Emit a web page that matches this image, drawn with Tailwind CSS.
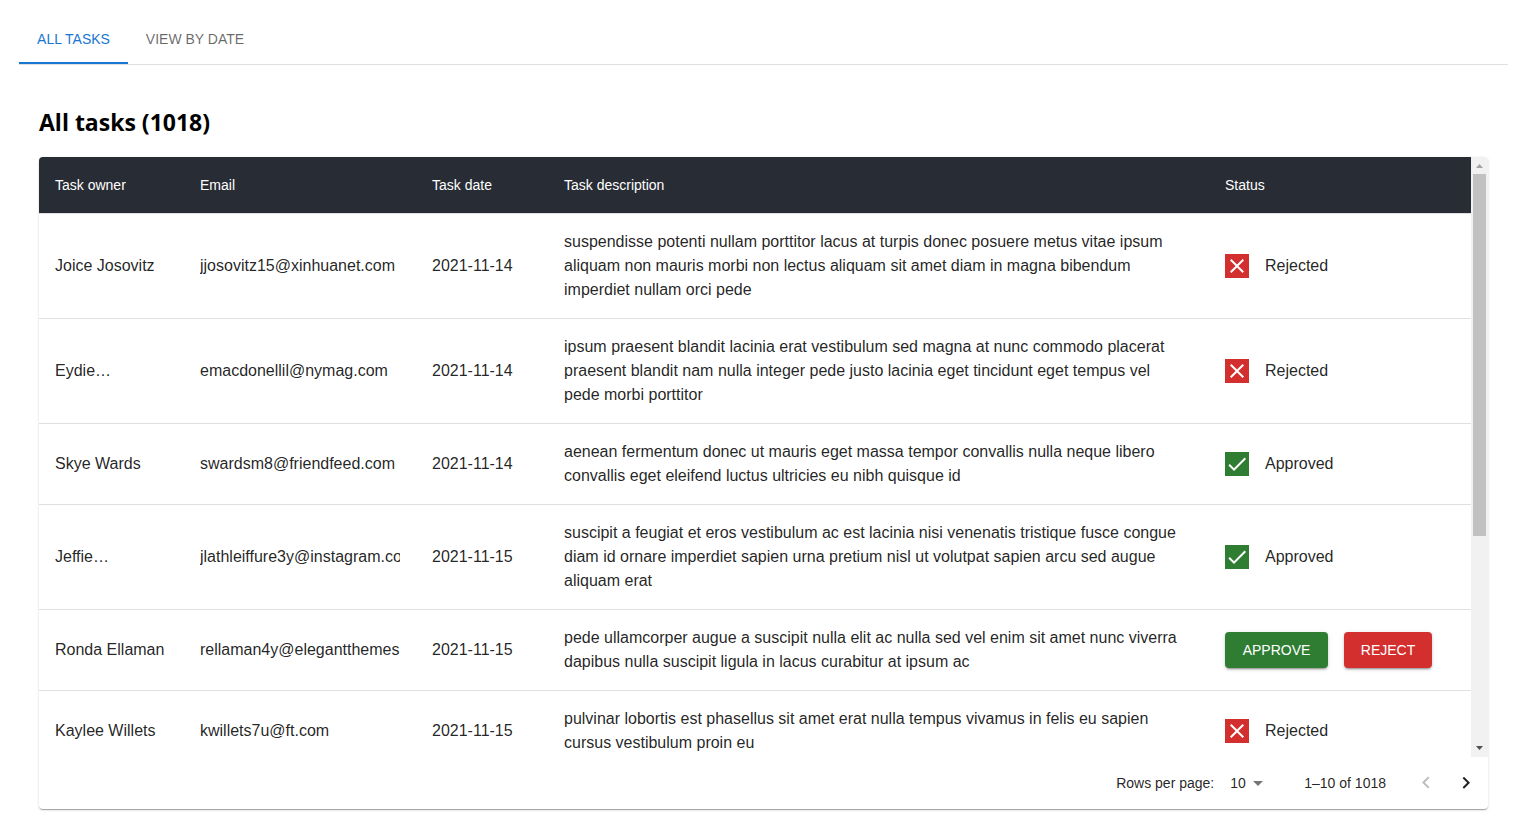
<!DOCTYPE html>
<html lang="en">
<head>
<meta charset="utf-8">
<title>All tasks</title>
<script src="https://cdn.jsdelivr.net/npm/@tailwindcss/browser@4"></script>
</head>
<body class="bg-white pt-4 pr-4 pb-2 pl-[19px] font-['Liberation_Sans',Arial,sans-serif] text-base text-black/87">
<svg class="hidden" aria-hidden="true">
  <symbol id="close" viewBox="0 0 24 24"><path fill="currentColor" d="M19 6.41L17.59 5 12 10.59 6.41 5 5 6.41 10.59 12 5 17.59 6.41 19 12 13.41 17.59 19 19 17.59 13.41 12z"/></symbol>
  <symbol id="check" viewBox="0 0 24 24"><path fill="currentColor" d="M9 16.17L4.83 12l-1.42 1.41L9 19 21 7l-1.41-1.41z"/></symbol>
</svg>

<nav class="flex border-b border-[#e0e0e0] text-sm" role="tablist">
  <button role="tab" aria-selected="true" class="h-12 w-[109px] border-b-2 border-[#1976d2] text-[#1976d2] uppercase">All tasks</button>
  <button role="tab" aria-selected="false" class="h-12 w-[134px] border-b-2 border-transparent text-black/60 uppercase">View by date</button>
</nav>

<main class="px-5 pt-10">
  <h2 class="mb-[18px] font-['Open_Sans',sans-serif] text-[23px] leading-[34px] font-bold text-black">All tasks (1018)</h2>

  <section class="overflow-hidden rounded bg-white shadow-[0_2px_1px_-1px_rgba(0,0,0,0.2),0_1px_1px_0_rgba(0,0,0,0.14),0_1px_3px_0_rgba(0,0,0,0.12)]">
    <div class="flex h-[600px] overflow-hidden">
      <div class="min-w-0 flex-1 overflow-hidden">
        <table class="w-full table-fixed border-separate border-spacing-0 text-left leading-6 [&_td]:border-b [&_td]:border-[#e0e0e0] [&_td]:p-4 [&_td:nth-child(4)]:pr-6 [&_th]:border-b [&_th]:border-[#e0e0e0] [&_th]:bg-[#282c34] [&_th]:bg-clip-padding [&_th]:p-4 [&_th]:text-sm [&_th]:leading-6 [&_th]:font-medium [&_th]:text-white">
          <colgroup><col class="w-[145px]"><col class="w-[232px]"><col class="w-[132px]"><col><col class="w-[262px]"></colgroup>
          <thead>
            <tr><th scope="col">Task owner</th><th scope="col">Email</th><th scope="col">Task date</th><th scope="col">Task description</th><th scope="col">Status</th></tr>
          </thead>
          <tbody>
            <tr>
              <td>Joice Josovitz</td>
              <td><div class="overflow-hidden whitespace-nowrap">jjosovitz15@xinhuanet.com</div></td>
              <td>2021-11-14</td>
              <td>suspendisse potenti nullam porttitor lacus at turpis donec posuere metus vitae ipsum aliquam non mauris morbi non lectus aliquam sit amet diam in magna bibendum imperdiet nullam orci pede</td>
              <td><div class="flex items-center gap-4"><svg class="size-6 bg-[#d32f2f] text-white"><use href="#close"/></svg>Rejected</div></td>
            </tr>
            <tr>
              <td>Eydie…</td>
              <td><div class="overflow-hidden whitespace-nowrap">emacdonellil@nymag.com</div></td>
              <td>2021-11-14</td>
              <td>ipsum praesent blandit lacinia erat vestibulum sed magna at nunc commodo placerat praesent blandit nam nulla integer pede justo lacinia eget tincidunt eget tempus vel pede morbi porttitor</td>
              <td><div class="flex items-center gap-4"><svg class="size-6 bg-[#d32f2f] text-white"><use href="#close"/></svg>Rejected</div></td>
            </tr>
            <tr>
              <td>Skye Wards</td>
              <td><div class="overflow-hidden whitespace-nowrap">swardsm8@friendfeed.com</div></td>
              <td>2021-11-14</td>
              <td>aenean fermentum donec ut mauris eget massa tempor convallis nulla neque libero convallis eget eleifend luctus ultricies eu nibh quisque id</td>
              <td><div class="flex items-center gap-4"><svg class="size-6 bg-[#2e7d32] text-white"><use href="#check"/></svg>Approved</div></td>
            </tr>
            <tr>
              <td>Jeffie…</td>
              <td><div class="overflow-hidden whitespace-nowrap">jlathleiffure3y@instagram.com</div></td>
              <td>2021-11-15</td>
              <td>suscipit a feugiat et eros vestibulum ac est lacinia nisi venenatis tristique fusce congue diam id ornare imperdiet sapien urna pretium nisl ut volutpat sapien arcu sed augue aliquam erat</td>
              <td><div class="flex items-center gap-4"><svg class="size-6 bg-[#2e7d32] text-white"><use href="#check"/></svg>Approved</div></td>
            </tr>
            <tr>
              <td>Ronda Ellaman</td>
              <td><div class="overflow-hidden whitespace-nowrap">rellaman4y@elegantthemes.com</div></td>
              <td>2021-11-15</td>
              <td>pede ullamcorper augue a suscipit nulla elit ac nulla sed vel enim sit amet nunc viverra dapibus nulla suscipit ligula in lacus curabitur at ipsum ac</td>
              <td>
                <div class="flex gap-4 text-sm text-white">
                  <button class="h-9 w-[103px] rounded bg-[#2e7d32] uppercase shadow-[0_3px_1px_-2px_rgba(0,0,0,0.2),0_2px_2px_0_rgba(0,0,0,0.14),0_1px_5px_0_rgba(0,0,0,0.12)]">Approve</button>
                  <button class="h-9 w-[88px] rounded bg-[#d32f2f] uppercase shadow-[0_3px_1px_-2px_rgba(0,0,0,0.2),0_2px_2px_0_rgba(0,0,0,0.14),0_1px_5px_0_rgba(0,0,0,0.12)]">Reject</button>
                </div>
              </td>
            </tr>
            <tr>
              <td>Kaylee Willets</td>
              <td><div class="overflow-hidden whitespace-nowrap">kwillets7u@ft.com</div></td>
              <td>2021-11-15</td>
              <td>pulvinar lobortis est phasellus sit amet erat nulla tempus vivamus in felis eu sapien cursus vestibulum proin eu</td>
              <td><div class="flex items-center gap-4"><svg class="size-6 bg-[#d32f2f] text-white"><use href="#close"/></svg>Rejected</div></td>
            </tr>
          </tbody>
        </table>
      </div>
      <!-- Scrollbar of the table area -->
      <div class="flex w-[17px] flex-col items-center justify-between bg-[#f1f1f1]" aria-hidden="true">
        <div class="flex flex-col items-center">
          <svg class="size-[17px]" viewBox="0 0 17 17"><path fill="#a3a3a3" d="M5 11h7L8.500 7z"/></svg>
          <div class="h-[362px] w-[13px] bg-[#c1c1c1]"></div>
        </div>
        <svg class="size-[17px]" viewBox="0 0 17 17"><path fill="#505050" d="M5 6h7L8.500 10z"/></svg>
      </div>
    </div>

    <footer class="flex h-[52px] items-center justify-end pr-0.5 text-sm">
      <label for="rows">Rows per page:</label>
      <div class="relative mr-[34px] ml-2">
        <select id="rows" class="block h-6 w-12 appearance-none bg-transparent pl-2 text-sm"><option>10</option><option>25</option><option>100</option></select>
        <svg class="pointer-events-none absolute top-0 right-0 size-6 text-black/54" viewBox="0 0 24 24"><path fill="currentColor" d="M7 10l5 5 5-5z"/></svg>
      </div>
      <p class="mr-5">1–10 of 1018</p>
      <button class="p-2 text-black/26" disabled aria-label="Go to previous page"><svg class="size-6" viewBox="0 0 24 24"><path fill="currentColor" d="M15.410 16.090l-4.580-4.590 4.580-4.590L14 5.500l-6 6 6 6z"/></svg></button>
      <button class="p-2" aria-label="Go to next page"><svg class="size-6" viewBox="0 0 24 24"><path fill="currentColor" d="M8.590 16.340l4.580-4.590-4.580-4.590L10 5.750l6 6-6 6z"/></svg></button>
    </footer>
  </section>
</main>
</body>
</html>
